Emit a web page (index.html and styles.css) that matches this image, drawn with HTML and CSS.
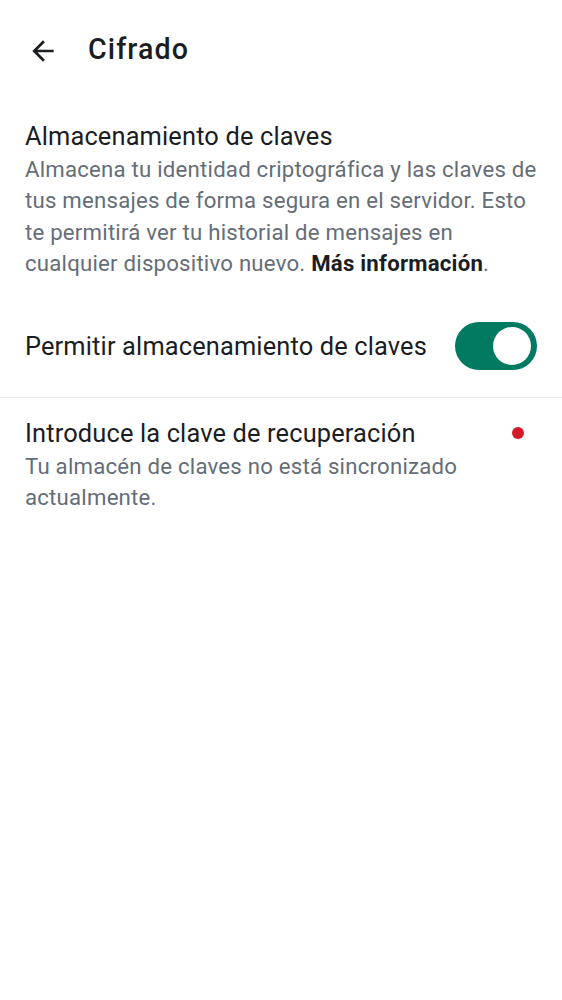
FILE: index.html
```html
<!DOCTYPE html>
<html lang="es">
<head>
<meta charset="utf-8">
<link rel="stylesheet" href="styles.css">
</head>
<body>
<header class="topbar">
  <span class="back" aria-label="Atrás">
    <svg viewBox="0 0 24 24" width="32" height="32"><path d="M20 11H7.83l5.59-5.59L12 4l-8 8 8 8 1.41-1.41L7.83 13H20v-2z" fill="#1b1d22"/></svg>
  </span>
  <h1 class="title">Cifrado</h1>
</header>
<main>
  <section class="block">
    <div class="item-title">Almacenamiento de claves</div>
    <p class="desc">Almacena tu identidad criptográfica y las claves de tus mensajes de forma segura en el servidor. Esto te permitirá ver tu historial de mensajes en cualquier dispositivo nuevo. <b class="link">Más información</b>.</p>
    <div class="toggle-row">
      <span class="item-title">Permitir almacenamiento de claves</span>
      <span class="switch"><span class="knob"></span></span>
    </div>
  </section>
  <div class="divider"></div>
  <section class="block block2">
    <div class="row-head">
      <div class="item-title">Introduce la clave de recuperación</div>
      <span class="dot"></span>
    </div>
    <p class="desc">Tu almacén de claves no está sincronizado actualmente.</p>
  </section>
</main>
</body>
</html>
```

FILE: styles.css
```css
* { box-sizing: border-box; }
html, body { margin: 0; padding: 0; background: #ffffff; }
body {
  font-family: Roboto, "Noto Sans", sans-serif;
  color: #1b1d22;
  width: 562px;
}
.topbar {
  height: 98px;
  display: flex;
  align-items: center;
  padding-left: 27px;
}
.back { display: flex; width: 32px; height: 32px; margin-top: 3px; }
.title {
  margin: 0 0 0 29px;
  font-size: 28.6px;
  font-weight: 500;
  line-height: 36px;
  letter-spacing: 1.1px;
  color: #1b1d22;
}
.block { padding: 20.6px 25px 27px 25px; }
.item-title {
  font-size: 25.4px;
  line-height: 34.9px;
  letter-spacing: 0.15px;
  color: #1b1d22;
}
.desc {
  margin: 0;
  font-size: 22.2px;
  line-height: 31.5px;
  color: #656d77;
  letter-spacing: 0.22px;
}
.link { color: #1b1d22; font-weight: 700; }
.toggle-row {
  margin-top: 42.5px;
  display: flex;
  align-items: center;
  justify-content: space-between;
}
.switch {
  width: 82px;
  height: 48px;
  border-radius: 24px;
  background: #007a61;
  display: flex;
  align-items: center;
  justify-content: flex-end;
  padding-right: 6px;
}
.knob {
  width: 38px;
  height: 38px;
  border-radius: 50%;
  background: #ffffff;
}
.divider { height: 1px; background: #e6e9ee; }
.block2 { padding-top: 17.6px; }
.row-head {
  display: flex;
  align-items: center;
  justify-content: space-between;
  padding-right: 13px;
}
.dot {
  width: 12px;
  height: 12px;
  border-radius: 50%;
  background: #d51928;
}
```
